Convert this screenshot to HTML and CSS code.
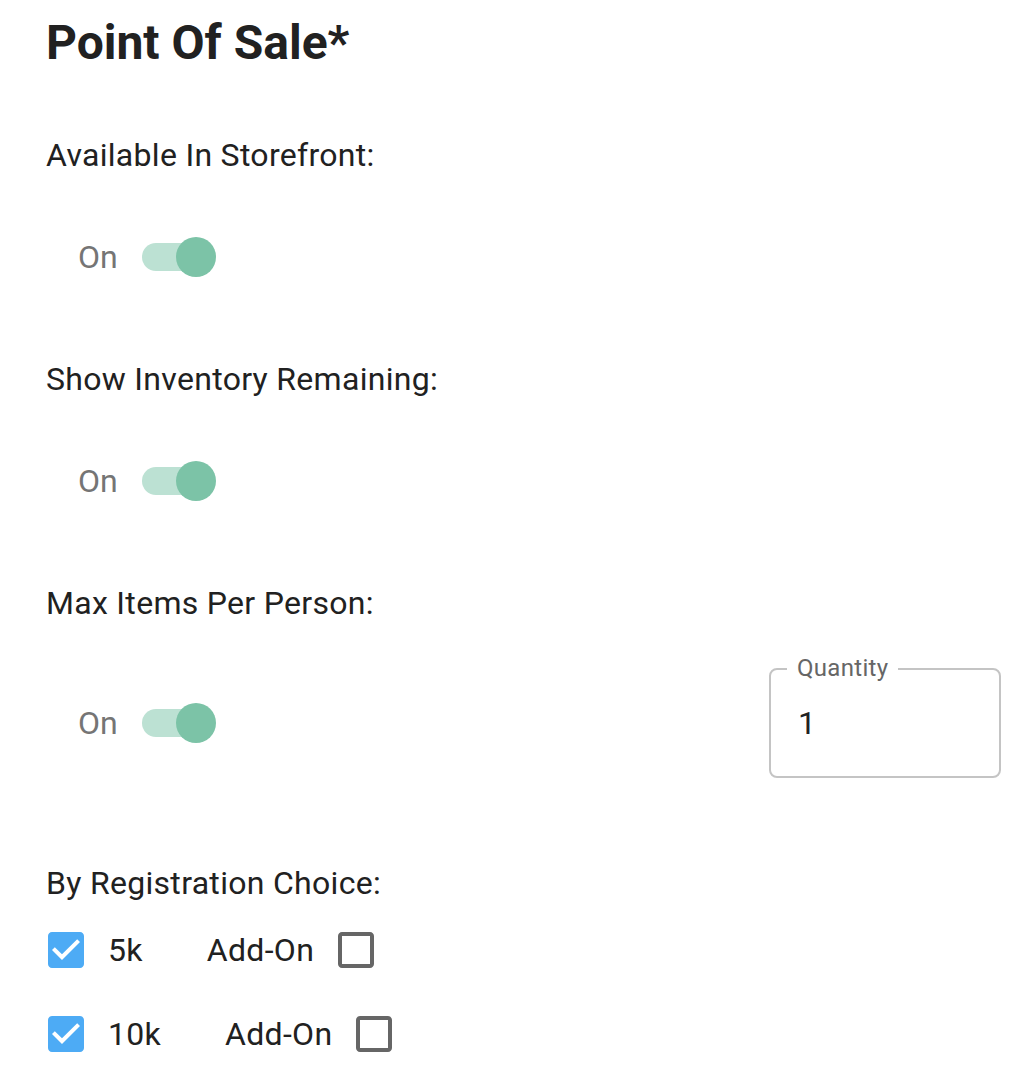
FILE: index.html
```html
<!DOCTYPE html>
<html lang="en">
<head>
<meta charset="utf-8">
<title>Point Of Sale</title>
<link rel="stylesheet" href="styles.css">
</head>
<body>
<div class="page">
  <h1 class="title">Point Of Sale*</h1>

  <div class="field-label first">Available In Storefront:</div>
  <div class="toggle-row">
    <span class="toggle-text">On</span>
    <span class="switch"><span class="track"></span><span class="thumb"></span></span>
  </div>

  <div class="field-label">Show Inventory Remaining:</div>
  <div class="toggle-row">
    <span class="toggle-text">On</span>
    <span class="switch"><span class="track"></span><span class="thumb"></span></span>
  </div>

  <div class="field-label">Max Items Per Person:</div>
  <div class="toggle-row tall">
    <div class="toggle-group">
      <span class="toggle-text">On</span>
      <span class="switch"><span class="track"></span><span class="thumb"></span></span>
    </div>
    <div class="textfield">
      <span class="tf-label">Quantity</span>
      <span class="tf-value">1</span>
    </div>
  </div>

  <div class="field-label reg">By Registration Choice:</div>
  <div class="check-row">
    <svg class="cb checked" viewBox="0 0 24 24"><path d="M19 3H5c-1.11 0-2 .9-2 2v14c0 1.1.89 2 2 2h14c1.11 0 2-.9 2-2V5c0-1.1-.89-2-2-2zm-9 14l-5-5 1.41-1.41L10 14.17l7.59-7.59L19 8l-9 9z"/></svg>
    <span class="cb-text">5k</span>
    <span class="addon">Add-On</span>
    <svg class="cb empty" viewBox="0 0 24 24"><path d="M19 5v14H5V5h14m0-2H5c-1.1 0-2 .9-2 2v14c0 1.1.9 2 2 2h14c1.1 0 2-.9 2-2V5c0-1.1-.9-2-2-2z"/></svg>
  </div>
  <div class="check-row">
    <svg class="cb checked" viewBox="0 0 24 24"><path d="M19 3H5c-1.11 0-2 .9-2 2v14c0 1.1.89 2 2 2h14c1.11 0 2-.9 2-2V5c0-1.1-.89-2-2-2zm-9 14l-5-5 1.41-1.41L10 14.17l7.59-7.59L19 8l-9 9z"/></svg>
    <span class="cb-text">10k</span>
    <span class="addon">Add-On</span>
    <svg class="cb empty" viewBox="0 0 24 24"><path d="M19 5v14H5V5h14m0-2H5c-1.1 0-2 .9-2 2v14c0 1.1.9 2 2 2h14c1.1 0 2-.9 2-2V5c0-1.1-.9-2-2-2z"/></svg>
  </div>
</div>
</body>
</html>
```

FILE: styles.css
```css
html, body {
  margin: 0;
  padding: 0;
  background: #ffffff;
}

body {
  font-family: Roboto, "Liberation Sans", Arial, sans-serif;
  color: rgba(0, 0, 0, 0.87);
}

.page {
  padding: 15px 19px 0 46px;
}

.title {
  margin: 0;
  font-size: 48px;
  line-height: 56px;
  font-weight: 700;
  color: #212121;
}

.field-label {
  margin-top: 60px;
  font-size: 32px;
  line-height: 40px;
  letter-spacing: 0.3px;
  font-weight: 400;
  color: #212121;
}

.field-label.first {
  margin-top: 64px;
}

.field-label.reg {
  margin-top: 80px;
}

.toggle-row {
  margin-top: 40px;
  height: 84px;
  display: flex;
  align-items: center;
  padding-left: 32px;
}

.toggle-row.tall {
  height: 120px;
  justify-content: space-between;
}

.toggle-group {
  display: flex;
  align-items: center;
}

.toggle-text {
  font-size: 32px;
  line-height: 40px;
  color: #757575;
}

.switch {
  position: relative;
  display: inline-block;
  width: 74px;
  height: 40px;
  margin-left: 24px;
}

.track {
  position: absolute;
  left: 0;
  top: 6px;
  width: 68px;
  height: 28px;
  border-radius: 14px;
  background: #bce1d3;
}

.thumb {
  position: absolute;
  left: 34px;
  top: 0;
  width: 40px;
  height: 40px;
  border-radius: 50%;
  background: #7cc3a7;
}

.textfield {
  position: relative;
  box-sizing: border-box;
  width: 232px;
  height: 110px;
  border: 2px solid #c4c4c4;
  border-radius: 8px;
  display: flex;
  align-items: center;
  padding-left: 27px;
}

.tf-label {
  position: absolute;
  left: 16px;
  top: -15px;
  padding: 0 10px;
  background: #ffffff;
  font-size: 24px;
  line-height: 26px;
  letter-spacing: 0.3px;
  color: #666666;
}

.tf-value {
  font-size: 32px;
  line-height: 40px;
  letter-spacing: 0.3px;
  color: #212121;
}

.check-row {
  height: 84px;
  display: flex;
  align-items: center;
}

.reg + .check-row {
  margin-top: 5px;
}

.cb {
  width: 48px;
  height: 48px;
  flex: none;
}

.cb.checked {
  margin-left: -4px;
  fill: #4dabf5;
}

.cb.empty {
  margin-left: 18px;
  fill: #666666;
}

.cb-text {
  margin-left: 18px;
  font-size: 32px;
  line-height: 40px;
  letter-spacing: 0.3px;
  color: #212121;
}

.addon {
  margin-left: 64px;
  font-size: 32px;
  line-height: 40px;
  letter-spacing: 0.3px;
  color: #212121;
}
```
